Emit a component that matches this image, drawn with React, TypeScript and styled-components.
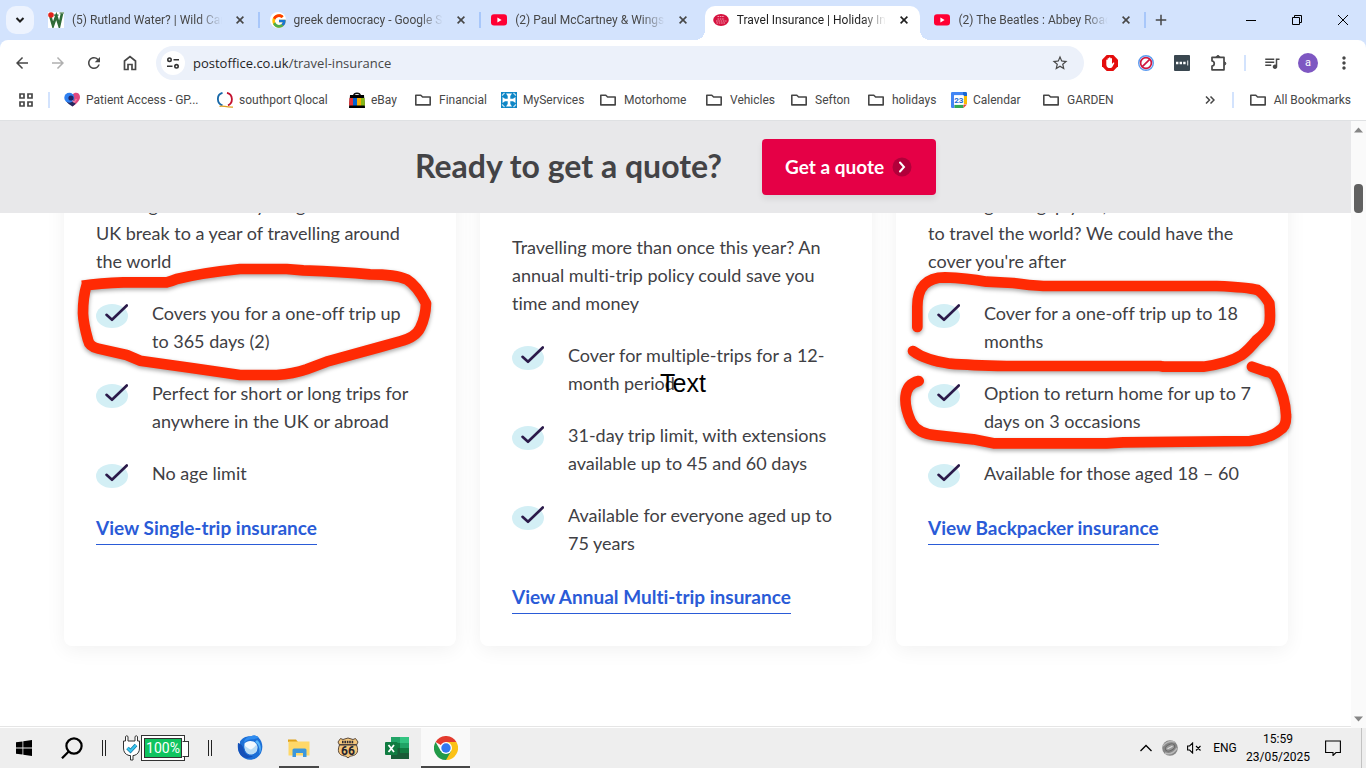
import React from "react";
import styled, { createGlobalStyle, css } from "styled-components";
import {
  MdArrowBack,
  MdArrowForward,
  MdRefresh,
  MdStarOutline,
  MdQueueMusic,
  MdMoreVert,
  MdAdd,
} from "react-icons/md";
import { FcGoogle } from "react-icons/fc";

const uiFont = `"Roboto", "Open Sans", sans-serif`;
const addressFont = `"Open Sans", "Noto Sans", sans-serif`;
const pageFont = `"Lato", "Open Sans", sans-serif`;

const GlobalStyle = createGlobalStyle`
  * { box-sizing: border-box; }
  body { margin: 0; background: #fff; font-family: ${uiFont}; }
  button { border: 0; padding: 0; background: none; color: inherit; font: inherit; cursor: pointer; }
  a { color: inherit; text-decoration: none; }
  ul, p, h2 { margin: 0; padding: 0; }
  ul { list-style: none; }
  svg { display: block; flex: none; }
`;

const Desktop = styled.div`
  position: relative;
  min-height: 100vh;
  display: flex;
  flex-direction: column;
  overflow: hidden;
`;

/* ---------- tab strip ---------- */

const TabStrip = styled.div`
  display: flex;
  height: 40px;
  background: #d3e3fd;
`;

const TabSearch = styled.button`
  display: grid;
  place-items: center;
  width: 28px;
  height: 28px;
  margin: 6px 3px 0 6px;
  border-radius: 10px;
  background: #edf3fe;
`;

const Tabs = styled.div`
  flex: 0 1 1108px;
  min-width: 0;
  display: grid;
  grid-template-columns: repeat(5, 1fr);
`;

const Tab = styled.div<{ $active?: boolean; $divided?: boolean }>`
  position: relative;
  display: flex;
  align-items: center;
  min-width: 0;
  margin: 6px 3px 0;
  padding: 0 8px 6px;
  color: ${(p) => (p.$active ? "#1f1f1f" : "#474747")};
  ${(p) =>
    p.$divided &&
    css`
      &::after {
        content: "";
        position: absolute;
        right: -4px;
        top: 6px;
        width: 2px;
        height: 16px;
        background: #a8c7fa;
      }
    `}
  ${(p) =>
    p.$active &&
    css`
      background: #fff;
      border-radius: 10px 10px 0 0;
      &::before,
      &::after {
        content: "";
        position: absolute;
        bottom: 0;
        width: 10px;
        height: 10px;
      }
      &::before {
        left: -10px;
        background: radial-gradient(circle at 0 0, transparent 10px, #fff 10px);
      }
      &::after {
        right: -10px;
        background: radial-gradient(circle at 100% 0, transparent 10px, #fff 10px);
      }
    `}
`;

const TabTitle = styled.span`
  flex: 1;
  min-width: 0;
  margin: 0 10px 0 8px;
  overflow: hidden;
  white-space: nowrap;
  font-size: 12px;
  line-height: 16px;
  mask-image: linear-gradient(to right, #000 calc(100% - 24px), transparent);
`;

const TabClose = styled.button`
  display: grid;
  place-items: center;
  width: 16px;
  height: 16px;
`;

const NewTab = styled.button`
  display: grid;
  place-items: center;
  width: 28px;
  height: 40px;
  margin-left: 2px;
`;

const WindowControls = styled.div`
  display: flex;
  margin-left: auto;
`;

const WindowButton = styled.button`
  display: grid;
  place-items: center;
  width: 46px;
  height: 40px;
`;

/* ---------- toolbar ---------- */

const ToolbarBack = styled.div`
  background: #d3e3fd;
`;

const Toolbar = styled.div`
  display: flex;
  align-items: center;
  height: 46px;
  padding: 0 4px;
  background: #fff;
  border-radius: 8px 8px 0 0;
`;

const ToolButton = styled.button<{ $faded?: boolean }>`
  display: grid;
  place-items: center;
  width: 36px;
  height: 34px;
  color: ${(p) => (p.$faded ? "#b0b0b0" : "#474747")};
`;

const Omnibox = styled.div`
  flex: 1;
  display: flex;
  align-items: center;
  height: 34px;
  margin: 0 8px;
  padding: 0 6px 0 5px;
  border-radius: 17px;
  background: #ecf1fa;
`;

const SiteInfo = styled.button`
  display: grid;
  place-items: center;
  width: 24px;
  height: 24px;
  border-radius: 12px;
  background: #fff;
`;

const Address = styled.span`
  flex: 1;
  margin-left: 8px;
  font-family: ${addressFont};
  font-size: 13px;
  line-height: 20px;
  color: #474747;
  b { font-weight: 400; color: #1f1f1f; }
`;

const Divider = styled.span`
  width: 2px;
  height: 16px;
  background: #d3e3fd;
`;

const ToolbarDivider = styled(Divider)`
  margin: 0 8px;
`;

const Avatar = styled.span`
  display: grid;
  place-items: center;
  width: 20px;
  height: 20px;
  border-radius: 10px;
  background: #7e57c2;
  color: #fff;
  font-size: 11px;
  line-height: 16px;
`;

/* ---------- bookmarks ---------- */

const BookmarkBar = styled.nav`
  display: flex;
  align-items: center;
  height: 35px;
  padding: 0 15px 7px 18px;
  border-bottom: 1px solid #dfe1e3;
  background: #fff;
`;

const AppsButton = styled.button`
  width: 16px;
  height: 16px;
  margin-right: 14px;
`;

const Bookmarks = styled.div`
  flex: 1;
  min-width: 0;
  margin-left: 14px;
  display: grid;
  grid-template-columns: 153px 132px 66px 86px 99px 106px 85px 77px 83px 92px auto;
  justify-content: start;
`;

const Bookmark = styled.a`
  display: flex;
  align-items: center;
  gap: 8px;
  height: 28px;
  white-space: nowrap;
  font-size: 12px;
  line-height: 16px;
  color: #474747;
`;

const SiteBookmark = styled(Bookmark)`
  gap: 6px;
`;

const Overflow = styled.button`
  display: grid;
  place-items: center;
  width: 16px;
  height: 16px;
  margin-right: 14px;
`;

const AllBookmarks = styled(Bookmark)`
  margin-left: 16px;
`;

/* ---------- page ---------- */

const Viewport = styled.div`
  flex: 1;
  display: flex;
`;

const Main = styled.main`
  flex: 1;
  min-width: 0;
  margin-bottom: 1px;
  border-bottom: 1px solid #e5e5e5;
  background: #fff;
  font-family: ${pageFont};
  font-variant-ligatures: none;
  color: #404044;
`;

const QuoteBar = styled.section`
  display: flex;
  align-items: center;
  justify-content: center;
  gap: 40px;
  height: 92px;
  background: #e8e8ea;
`;

const QuoteTitle = styled.h2`
  padding-bottom: 2px;
  font-size: 32px;
  line-height: 40px;
  font-weight: 700;
  color: #434346;
`;

const QuoteButton = styled.button`
  display: flex;
  align-items: center;
  gap: 8px;
  height: 56px;
  padding: 0 24px 0 23px;
  border-radius: 4px;
  background: #e50046;
  box-shadow: 0 4px 6px rgba(0, 0, 0, 0.08);
  color: #fff;
  font-size: 19px;
  line-height: 24px;
  font-weight: 700;
`;

const CardArea = styled.section`
  overflow: hidden;
  padding: 0 63px 64px 64px;
`;

const CardGrid = styled.div`
  display: grid;
  grid-template-columns: repeat(3, 1fr);
  gap: 24px;
  margin-top: -54px;
`;

const Card = styled.article<{ $lowered?: boolean }>`
  padding: ${(p) => (p.$lowered ? 74 : 32)}px 32px 32px;
  border-radius: 8px;
  background: #fff;
  box-shadow: 0 4px 20px rgba(0, 0, 0, 0.06);
  font-size: 18px;
  line-height: 28px;
  white-space: nowrap;
`;

const Benefits = styled.ul`
  display: grid;
  gap: 24px;
  margin: 24px 0 26px;
`;

const Benefit = styled.li`
  display: flex;
  align-items: flex-start;
  gap: 24px;
  svg { margin-top: 5px; }
`;

const CardLink = styled.a`
  display: inline-block;
  padding-bottom: 2px;
  border-bottom: 1px solid #2a5bd7;
  color: #2a5bd7;
  font-size: 19px;
  font-weight: 700;
`;

const ScrollBar = styled.div`
  display: flex;
  flex-direction: column;
  align-items: center;
  width: 15px;
  padding: 6px 0;
  background: #fafafa;
`;

const Thumb = styled.div`
  width: 9px;
  height: 29px;
  margin: 51px 0 auto;
  border-radius: 4px;
  background: #616161;
`;

/* ---------- taskbar ---------- */

const Taskbar = styled.footer`
  display: flex;
  align-items: center;
  height: 40px;
  background: #eee;
  color: #000;
`;

const TaskButton = styled.button<{ $open?: boolean; $active?: boolean }>`
  display: grid;
  place-items: center;
  width: 49px;
  height: 40px;
  border-top: 2px solid transparent;
  border-bottom: 2px solid ${(p) => (p.$open ? "#484848" : "transparent")};
  ${(p) => p.$active && css`background: #f9f9f9; border-top-color: #f9f9f9;`}
`;

const StartButton = styled(TaskButton)`
  width: 48px;
`;

const MailButton = styled(TaskButton)`
  margin-left: 13px;
`;

const FilesButton = styled(TaskButton)`
  width: 40px;
  margin: 0 4px 0 5px;
`;

const Grip = styled.span`
  width: 4px;
  height: 16px;
  border: solid #222;
  border-width: 0 1px;
`;

const PowerMeter = styled.div`
  display: flex;
  align-items: center;
  margin: 0 18px 0 16px;
`;

const Battery = styled.div`
  position: relative;
  display: flex;
  width: 44px;
  height: 26px;
  margin-right: 5px;
  padding: 2px;
  border: 1px solid #333;
  background: #fff;
  &::after {
    content: "";
    position: absolute;
    right: -5px;
    top: 5px;
    width: 5px;
    height: 14px;
    border: 1px solid #333;
    border-left-color: #fff;
    background: #fff;
  }
`;

const Charge = styled.span`
  flex: 1;
  border: 1px solid #333;
  background: #0fc45f;
  color: #fff;
  font-size: 14px;
  line-height: 18px;
  text-align: center;
`;

const Tray = styled.div`
  display: flex;
  align-items: center;
  margin-left: auto;
  font-size: 12px;
  line-height: 18px;
`;

const TrayButton = styled.button`
  display: grid;
  place-items: center;
  width: 24px;
  height: 40px;
`;

const Language = styled.button`
  width: 38px;
`;

const Clock = styled.time`
  width: 68px;
  text-align: center;
`;

const NoticeButton = styled(TrayButton)`
  width: 42px;
  margin-right: 7px;
`;

const PeekEdge = styled.span`
  width: 5px;
  height: 40px;
  border-left: 1px solid #c2c2c2;
`;

/* ---------- annotations ---------- */

const Markup = styled.svg`
  position: absolute;
  left: 0;
  top: 0;
  pointer-events: none;
  filter: drop-shadow(0 2px 2px rgba(0, 0, 0, 0.35));
`;

const TextNote = styled.span`
  position: absolute;
  left: 660px;
  top: 369px;
  font: 25px/28px "Liberation Sans", Arial, sans-serif;
  color: #000;
`;

/* ---------- drawings ---------- */

const Folder = () => (
  <svg width="16" height="16" viewBox="0 0 16 16" fill="none" stroke="#474747" strokeWidth="1.6" strokeLinejoin="round">
    <path d="M.8 12.9V3.2h5l1.800 1.800h7.600v7.900H.8z" />
  </svg>
);

const YouTube = () => (
  <svg width="16" height="16" viewBox="0 0 16 16">
    <rect y="2.200" width="16" height="11.400" rx="3" fill="#ff0033" />
    <path d="M6.400 5.400v5l4.200-2.500z" fill="#fff" />
  </svg>
);

const WildCamping = () => (
  <svg width="16" height="16" viewBox="0 0 16 16">
    <rect width="16" height="16" fill="#fff" />
    <path d="M2.500 5 5 13.500 8.300 4l3 9.500L14 1.500" fill="none" stroke="#2f6b38" strokeWidth="2.600" />
    <path d="M6 3.200h4.500M11.500 1h4.500" stroke="#2f6b38" strokeWidth="1.200" />
    <circle cx="3" cy="3" r="2.800" fill="#e2231a" />
  </svg>
);

const PostOffice = () => (
  <svg width="16" height="16" viewBox="0 0 16 16">
    <ellipse cx="8" cy="8" rx="7.800" ry="6" fill="#d6123f" />
    <path d="M4.500 4.500h7M4.500 7h7M3 9h10.500M3.500 11h9" stroke="#f3a9ba" strokeWidth=".9" strokeDasharray="1.600 .7" />
  </svg>
);

const GoogleTile = () => (
  <svg width="16" height="16" viewBox="0 0 16 16">
    <circle cx="8" cy="8" r="8" fill="#fff" />
    <FcGoogle x="1" y="1" width="14" height="14" />
  </svg>
);

const Heart = () => (
  <svg width="16" height="16" viewBox="0 0 16 16">
    <path d="M8.500 14.500C12 12 16 9 16 5c0-4.500-5-5.500-7.500-2.500L7 8z" fill="#e0487f" />
    <path d="M2 8.500C3 11.500 6 13 8.500 14.500L11.500 12 9 5z" fill="#23285e" />
    <circle cx="5.300" cy="5.800" r="5" fill="#2f80f0" />
    <circle cx="7" cy="6" r="2.600" fill="#1d2566" />
    <path d="m8.500 8.500 1.700 1.700L12.500 7" stroke="#f07fa8" strokeWidth="1.300" fill="none" />
  </svg>
);

const Qlocal = () => (
  <svg width="16" height="16" viewBox="0 0 16 16" fill="none">
    <path d="M5.500.8C-.8 2.500-.5 11.500 5.500 13.300" stroke="#1768a8" strokeWidth="1.800" />
    <path d="M10 .8c6.500 1.700 6.200 10.500 1 12.500" stroke="#c4122f" strokeWidth="1.800" />
    <path d="M2.500 14.300c4-1 6 1.200 13.500.8" stroke="#e0a020" strokeWidth="1.200" />
  </svg>
);

const EbayBag = () => (
  <svg width="16" height="16" viewBox="0 0 16 16">
    <path d="M4.500 4C5 .3 11 .3 11.500 4" fill="none" stroke="#111" strokeWidth="1.400" />
    <path d="M1 3h14l1 13H0z" fill="#000" />
    <path d="M.5 6H4v7.500H0z" fill="#e53238" />
    <path d="M4 6h4v7.500H4z" fill="#0064d2" />
    <path d="M8 6h4v7.500H8z" fill="#f5af02" />
    <path d="M12 6h3.500l.5 7.500h-4z" fill="#86b817" />
  </svg>
);

const MyServices = () => (
  <svg width="16" height="16" viewBox="0 0 16 16">
    <rect width="16" height="16" fill="#0e86c6" />
    <path d="M5 1.500h6L9.300 4v2.700H12L14.500 5v6L12 9.300H9.300V12l1.700 2.500H5L6.700 12V9.300H4L1.500 11V5L4 6.700h2.700V4z" fill="#fff" />
    <path d="M1 3.500 3.500 1M12.500 1 15 3.500M1 12.500 3.500 15M15 12.500 12.500 15" stroke="#bfe2f4" strokeWidth="1.200" />
  </svg>
);

const CalendarIcon = () => (
  <svg width="16" height="16" viewBox="0 0 16 16">
    <path d="M0 1.200A1.200 1.200 0 0 1 1.200 0H12v3.500H3.500V16H1.200A1.200 1.200 0 0 1 0 14.800z" fill="#4285f4" />
    <path d="M12 0h2.800A1.200 1.200 0 0 1 16 1.200V4h-4z" fill="#1967d2" />
    <path d="M12.500 4H16v8h-3.500z" fill="#fbbc04" />
    <path d="M3.500 12.500h9V16h-9z" fill="#34a853" />
    <path d="M12.500 12.500H16L12.500 16z" fill="#ea4335" />
    <path d="M3 3.200h9.800v9.600H3z" fill="#fff" />
    <text x="7.800" y="11" fontSize="8" fontWeight="700" textAnchor="middle" fill="#1967d2">23</text>
  </svg>
);

const Tick = () => (
  <svg width="32" height="24" viewBox="0 0 32 24">
    <ellipse cx="16" cy="12" rx="16" ry="12" fill="#d3eff5" />
    <path d="M10.500 10.800l5.500 5L30.800 1.500" fill="none" stroke="#2b1a4a" strokeWidth="2.600" strokeLinecap="round" strokeLinejoin="round" />
  </svg>
);

const Arrow = ({ down }: { down?: boolean }) => (
  <svg width="9" height="6" viewBox="0 0 9 6">
    <path d={down ? "M0 .5h9L4.500 5.500z" : "M0 5.500h9L4.500.5z"} fill="#868686" />
  </svg>
);

type TabItem = { title: string; icon: React.ReactNode; active?: boolean; divided?: boolean };

const tabs: TabItem[] = [
  { title: "(5) Rutland Water? | Wild Cam", icon: <WildCamping />, divided: true },
  { title: "greek democracy - Google S", icon: <GoogleTile />, divided: true },
  { title: "(2) Paul McCartney & Wings", icon: <YouTube /> },
  { title: "Travel Insurance | Holiday Ins", icon: <PostOffice />, active: true },
  { title: "(2) The Beatles : Abbey Road", icon: <YouTube />, divided: true },
];

const bookmarks: { label: string; icon?: React.ReactNode }[] = [
  { label: "Patient Access - GP...", icon: <Heart /> },
  { label: "southport Qlocal", icon: <Qlocal /> },
  { label: "eBay", icon: <EbayBag /> },
  { label: "Financial" },
  { label: "MyServices", icon: <MyServices /> },
  { label: "Motorhome" },
  { label: "Vehicles" },
  { label: "Sefton" },
  { label: "holidays" },
  { label: "Calendar", icon: <CalendarIcon /> },
  { label: "GARDEN" },
];

const cards = [
  {
    intro: ["Looking for cover anything from a", "UK break to a year of travelling around", "the world"],
    benefits: [
      ["Covers you for a one-off trip up", "to 365 days (2)"],
      ["Perfect for short or long trips for", "anywhere in the UK or abroad"],
      ["No age limit"],
    ],
    link: "View Single-trip insurance",
  },
  {
    lowered: true,
    intro: ["Travelling more than once this year? An", "annual multi-trip policy could save you", "time and money"],
    benefits: [
      ["Cover for multiple-trips for a 12-", "month period"],
      ["31-day trip limit, with extensions", "available up to 45 and 60 days"],
      ["Available for everyone aged up to", "75 years"],
    ],
    link: "View Annual Multi-trip insurance",
  },
  {
    intro: ["Heading on a gap year, or want", "to travel the world? We could have the", "cover you're after"],
    benefits: [
      ["Cover for a one-off trip up to 18", "months"],
      ["Option to return home for up to 7", "days on 3 occasions"],
      ["Available for those aged 18 – 60"],
    ],
    link: "View Backpacker insurance",
  },
];

const Lines = ({ of }: { of: string[] }) => (
  <>
    {of.map((line, i) => (
      <React.Fragment key={line}>
        {i > 0 && <br />}
        {line}
      </React.Fragment>
    ))}
  </>
);

export default function App() {
  return (
    <Desktop>
      <GlobalStyle />
      <TabStrip>
        <TabSearch aria-label="Search tabs">
          <svg width="10" height="8" viewBox="0 0 10 8" fill="none" stroke="#1f1f1f" strokeWidth="2">
            <path d="M1.500 2 5 5.500 8.500 2" />
          </svg>
        </TabSearch>
        <Tabs>
          {tabs.map((t) => (
            <Tab key={t.title} $active={t.active} $divided={t.divided}>
              {t.icon}
              <TabTitle>{t.title}</TabTitle>
              <TabClose aria-label="Close tab">
                <svg width="8" height="8" viewBox="0 0 8 8" stroke="currentColor" strokeWidth="1.600">
                  <path d="m.6.6 6.800 6.800M7.400.6.6 7.400" />
                </svg>
              </TabClose>
            </Tab>
          ))}
        </Tabs>
        <NewTab aria-label="New tab">
          <MdAdd size={18} color="#474747" />
        </NewTab>
        <WindowControls>
          <WindowButton aria-label="Minimise">
            <svg width="10" height="10" viewBox="0 0 10 10"><path d="M0 5h10v1H0z" /></svg>
          </WindowButton>
          <WindowButton aria-label="Restore">
            <svg width="10" height="10" viewBox="0 0 10 10" fill="none" stroke="#000">
              <path d="M.5 2.500h7v7h-7zM2.500 2.500v-2h7v7h-2" />
            </svg>
          </WindowButton>
          <WindowButton aria-label="Close">
            <svg width="10" height="10" viewBox="0 0 10 10" stroke="#000"><path d="m0 0 10 10M10 0 0 10" /></svg>
          </WindowButton>
        </WindowControls>
      </TabStrip>

      <ToolbarBack>
        <Toolbar>
          <ToolButton aria-label="Back"><MdArrowBack size={18} /></ToolButton>
          <ToolButton aria-label="Forward" $faded><MdArrowForward size={18} /></ToolButton>
          <ToolButton aria-label="Reload"><MdRefresh size={18} /></ToolButton>
          <ToolButton aria-label="Home">
            <svg width="14" height="16" viewBox="0 0 14 16" fill="none" stroke="#474747" strokeWidth="1.700">
              <path d="M1.500 14.500V6L7 1.500 12.500 6v8.500H9v-5H5v5z" />
            </svg>
          </ToolButton>
          <Omnibox>
            <SiteInfo aria-label="Site information">
              <svg width="14" height="14" viewBox="0 0 14 14" fill="none" stroke="#333" strokeWidth="1.600">
                <circle cx="3.500" cy="3.700" r="1.700" />
                <circle cx="10.500" cy="10.300" r="1.700" />
                <path d="M7.500 3.700H13M1 10.300h5.500" />
              </svg>
            </SiteInfo>
            <Address><b>postoffice.co.uk</b>/travel-insurance</Address>
            <ToolButton aria-label="Bookmark this page"><MdStarOutline size={18} /></ToolButton>
          </Omnibox>
          <ToolButton aria-label="Ad blocker">
            <svg width="16" height="16" viewBox="0 0 16 16">
              <path d="M4.700 0h6.600L16 4.700v6.600L11.300 16H4.700L0 11.300V4.700z" fill="#e40d0d" />
              <path d="M4.300 8V5.300c0-1 1.300-1 1.300 0V3.700c0-1 1.400-1 1.400 0V3c0-1 1.500-1 1.500 0v.8c0-1 1.500-1 1.500.2v5l1-1.200c.8-.8 1.600-.2 1.200.6l-1.900 3.600C9.500 13.600 4.300 14 4.300 9.500z" fill="#fff" />
            </svg>
          </ToolButton>
          <ToolButton aria-label="Popup blocker">
            <svg width="16" height="16" viewBox="0 0 16 16" fill="none">
              <circle cx="8" cy="8" r="7.300" stroke="#5b9bf0" strokeWidth="1.400" fill="#fff" />
              <circle cx="8" cy="8" r="5.400" stroke="#cf1740" strokeWidth="1.700" />
              <path d="m4.300 11.700 7.400-7.400" stroke="#cf1740" strokeWidth="1.700" />
            </svg>
          </ToolButton>
          <ToolButton aria-label="Password manager">
            <svg width="16" height="16" viewBox="0 0 16 16">
              <rect width="16" height="16" rx="1" fill="#3a4750" />
              <path d="M2 6.800h2.400v2.400H2zm3.600 0H8v2.400H5.600zm3.600 0h2.400v2.400H9.200zM13.300 5.500h.9v5h-.9z" fill="#fff" />
            </svg>
          </ToolButton>
          <ToolButton aria-label="Extensions">
            <svg width="17" height="16" viewBox="0 0 17 16" fill="none" stroke="#474747" strokeWidth="1.700" strokeLinejoin="round">
              <path d="M2 2.300h12v12.500H2v-3.700c3-.3 3-4.800 0-5.100z" />
              <path d="M6.300 2C6.300 0 9.700 0 9.700 2M14.300 6.800c2 0 2 3.400 0 3.400" fill="#474747" strokeWidth="1" />
            </svg>
          </ToolButton>
          <ToolbarDivider />
          <ToolButton aria-label="Media controls"><MdQueueMusic size={18} /></ToolButton>
          <ToolButton aria-label="Profile"><Avatar>a</Avatar></ToolButton>
          <ToolButton aria-label="Menu"><MdMoreVert size={20} /></ToolButton>
        </Toolbar>
      </ToolbarBack>

      <BookmarkBar>
        <AppsButton aria-label="Apps">
          <svg width="16" height="16" viewBox="0 0 16 16" fill="none" stroke="#474747" strokeWidth="1.700">
            <path d="M2 2h4v4H2zM10 2h4v4h-4zM2 10h4v4H2zM10 10h4v4h-4z" />
          </svg>
        </AppsButton>
        <Divider />
        <Bookmarks>
          {bookmarks.map((b) =>
            b.icon ? (
              <SiteBookmark href="#" key={b.label}>{b.icon}{b.label}</SiteBookmark>
            ) : (
              <Bookmark href="#" key={b.label}><Folder />{b.label}</Bookmark>
            ),
          )}
        </Bookmarks>
        <Overflow aria-label="More bookmarks">
          <svg width="10" height="8" viewBox="0 0 10 8" fill="none" stroke="#474747" strokeWidth="1.500">
            <path d="m1 .5 3.500 3.500L1 7.500M5.500.5 9 4 5.500 7.500" />
          </svg>
        </Overflow>
        <Divider />
        <AllBookmarks href="#"><Folder />All Bookmarks</AllBookmarks>
      </BookmarkBar>

      <Viewport>
        <Main>
          <QuoteBar>
            <QuoteTitle>Ready to get a quote?</QuoteTitle>
            <QuoteButton>
              Get a quote
              <svg width="20" height="20" viewBox="0 0 20 20">
                <circle cx="10" cy="10" r="9.500" fill="#b1003a" />
                <path d="m8 5.500 4 4.500-4 4.500" fill="none" stroke="#fff" strokeWidth="2" strokeLinecap="round" />
              </svg>
            </QuoteButton>
          </QuoteBar>
          <CardArea>
            <CardGrid>
              {cards.map((c) => (
                <Card key={c.link} $lowered={c.lowered}>
                  <p><Lines of={c.intro} /></p>
                  <Benefits>
                    {c.benefits.map((b) => (
                      <Benefit key={b[0]}>
                        <Tick />
                        <span><Lines of={b} /></span>
                      </Benefit>
                    ))}
                  </Benefits>
                  <CardLink href="#">{c.link}</CardLink>
                </Card>
              ))}
            </CardGrid>
          </CardArea>
        </Main>
        <ScrollBar>
          <Arrow />
          <Thumb />
          <Arrow down />
        </ScrollBar>
      </Viewport>

      <Taskbar>
        <StartButton aria-label="Start">
          <svg width="16" height="16" viewBox="0 0 16 16">
            <path d="M0 2.300 6.500 1.400v6.200H0zM7.300 1.300 16 0v7.600H7.300zM0 8.400h6.500v6.200L0 13.700zM7.300 8.400H16V16l-8.700-1.300z" />
          </svg>
        </StartButton>
        <StartButton aria-label="Search">
          <svg width="22" height="22" viewBox="0 0 22 22" fill="none" stroke="#000" strokeWidth="2.200">
            <circle cx="13" cy="9" r="7.600" />
            <path d="M7.700 14.500 1 21.300" />
          </svg>
        </StartButton>
        <Grip style={{ marginLeft: 6 }} />
        <PowerMeter>
          <svg width="19" height="26" viewBox="0 0 19 26" fill="#fff" stroke="#333">
            <path d="M3.500 6V1.500q1.300-1.500 2.500 0V6h7V1.500q1.300-1.500 2.500 0V6h2v7q0 6-5.500 7.500H11V25H8.500v-4.500H7Q1.500 19 1.500 13V6z" />
            <path d="m5.500 13 3 3 5.500-6" fill="none" stroke="#187aa8" strokeWidth="3.600" />
            <path d="m5.500 13 3 3 5.500-6" fill="none" stroke="#39c6ee" strokeWidth="2" />
          </svg>
          <Battery><Charge>100%</Charge></Battery>
        </PowerMeter>
        <Grip />
        <MailButton aria-label="Thunderbird">
          <svg width="26" height="26" viewBox="0 0 26 26">
            <path d="M3 6.500C5 3 9 .8 14 1.200c3-1.500 7 0 7.500 1.300 4 4 5 10 2.500 15.500C20 26 9 27 3.500 20 .5 16 .5 11 1 8l2 2z" fill="#1c6fd6" />
            <path d="M14 1.200c3-1.500 7 0 7.500 1.300C20 4 17 4 13 4.500 10 5 8 6.500 7 8c0-4 3-6 7-6.800z" fill="#2f8cf0" />
            <path d="M20 5c4 3 5 9 2.500 14 .5-5-.5-10-4.500-12z" fill="#58b7fa" />
            <path d="M1 8c3 .5 5 3 6 7 1 4 4 6 9 6C9 26 1 21 1 12z" fill="#1450b8" />
            <path d="M7.500 8.500C10 5.500 16 5 19 8.500c3 4 1 9-3 10.500-5 1.500-9-2-8.500-10.500z" fill="#f2f9fe" />
            <path d="M7.500 10.500q5 4 6.500 4t5.500-5c2 5-1 9-4 9.700-5 1-8-2.700-8-8.700z" fill="#b8dcf5" />
          </svg>
        </MailButton>
        <FilesButton aria-label="File Explorer" $open>
          <svg width="22" height="20" viewBox="0 0 22 20">
            <path d="M0 1.500h8l2 2.500H0z" fill="#e0a21b" />
            <path d="M.5 3.500h21v14H.5z" fill="#ffd868" />
            <path d="M4.500 19v-7q0-1.500 1.500-1.500h11q1.500 0 1.500 1.500v7H15v-4H8v4z" fill="#3c97dc" />
          </svg>
        </FilesButton>
        <TaskButton aria-label="Route 66">
          <svg width="22" height="22" viewBox="0 0 22 22">
            <path d="M3.500 1.500 6 2.500l5-1.500 5 1.500 2.500-1L21 5l-1.500 3c2.500 6 .5 9.500-3 10.500-2.500.5-4 .8-5.500 2.500-1.500-1.700-3-2-5.500-2.500C2 17.500 0 14 2.500 8L1 5z" fill="#f4c67b" stroke="#5b4a3c" />
            <path d="M2.500 7.800h17" stroke="#2e2a33" strokeWidth="1.300" />
            <path d="M5 5h12" stroke="#2e2a33" strokeWidth="2.600" strokeDasharray="1.600 .8" />
            <text x="11" y="17.500" fontSize="12" fontWeight="700" textAnchor="middle" fill="#25222e">66</text>
          </svg>
        </TaskButton>
        <TaskButton aria-label="Excel">
          <svg width="24" height="22" viewBox="0 0 24 22">
            <path d="M6 0h9v7H6z" fill="#21a366" />
            <path d="M15 0h9v6h-9z" fill="#33c481" />
            <path d="M6 6h9v5H6z" fill="#107c41" />
            <path d="M15 6h9v5h-9z" fill="#21a366" />
            <path d="M6 11h9v11H6z" fill="#185c37" />
            <path d="M15 11h9v5h-9z" fill="#107c41" />
            <path d="M14 16h10v6H14z" fill="#185c37" />
            <rect y="5" width="12.500" height="13" rx="1" fill="#107c41" />
            <path d="m3.500 8 5.500 7M9 8l-5.500 7" stroke="#fff" strokeWidth="1.800" />
          </svg>
        </TaskButton>
        <TaskButton aria-label="Chrome" $open $active>
          <svg width="24" height="24" viewBox="0 0 24 24">
            <path d="M12 12 1.600 6a12 12 0 0 1 20.800 0z" fill="#e33b2e" />
            <path d="M12 12V6h10.400A12 12 0 0 1 12 24z" fill="#fbc116" />
            <path d="M1.600 6 6.800 15 12 12l5.200 3L12 24A12 12 0 0 1 1.600 6z" fill="#229a48" />
            <circle cx="12" cy="12" r="6" fill="#fff" />
            <circle cx="12" cy="12" r="4.700" fill="#3178f0" />
          </svg>
        </TaskButton>
        <Tray>
          <TrayButton aria-label="Show hidden icons">
            <svg width="12" height="8" viewBox="0 0 12 8" fill="none" stroke="#000" strokeWidth="1.300"><path d="m.5 7 5.500-5.500L11.500 7" /></svg>
          </TrayButton>
          <TrayButton aria-label="Network">
            <svg width="16" height="16" viewBox="0 0 16 16">
              <circle cx="8" cy="8" r="7.800" fill="#858585" />
              <path d="M1 6c4-5 8-5 12-4M3 13c5 2 9 0 12-5" stroke="#b8b8b8" strokeWidth="1.500" fill="none" />
              <ellipse cx="8" cy="7.500" rx="5" ry="3" transform="rotate(-28 8 7.500)" fill="#999" stroke="#666" />
              <path d="m5.500 8.700 5-2.500" stroke="#e0e0e0" strokeWidth="1.200" />
            </svg>
          </TrayButton>
          <TrayButton aria-label="Volume">
            <svg width="15" height="12" viewBox="0 0 15 12" fill="none" stroke="#000" strokeWidth="1.100">
              <path d="M.6 4v4h2l3 3V1l-3 3zM9 4l4.500 4.500M13.500 4 9 8.500" />
            </svg>
          </TrayButton>
          <Language>ENG</Language>
          <Clock>15:59<br />23/05/2025</Clock>
          <NoticeButton aria-label="Notifications">
            <svg width="16" height="16" viewBox="0 0 16 16" fill="none" stroke="#000" strokeWidth="1.100">
              <path d="M.6 1h14.800v11.500H11l-3 3v-3H.6z" />
            </svg>
          </NoticeButton>
          <PeekEdge />
        </Tray>
      </Taskbar>

      <TextNote>Text</TextNote>
      <Markup width="1366" height="768" viewBox="0 0 1366 768" fill="none" stroke="#ff2a04" aria-hidden="true">
        <g strokeWidth="32" strokeLinejoin="round">
          <path
            transform="translate(60 200) scale(.33333)"
            d="M66 257Q120 250 190 247H320Q335 243 350 237Q430 218 540 207H680L730 211Q850 215 930 223Q1005 223 1040 238Q1072 258 1098 310Q1097 350 1081 383Q1068 412 1020 424L960 441 800 485 740 508Q700 522 650 525H540L400 505 240 482 200 465 115 446Q88 440 84 420Q70 370 69 340Q69 290 80 255"
          />
          <g transform="translate(890 200) scale(.33333)" strokeLinecap="round">
            <path d="M82 381V320Q82 232 165 232Q230 234 290 245L370 249Q420 256 460 258H980Q1075 262 1103 270Q1120 280 1138 310Q1142 350 1138 372Q1132 395 1100 420Q1075 450 1055 465Q1015 490 940 500H820L810 498H350Q240 496 180 491Q105 480 69 453" />
            <path d="M86 543C35 555 40 615 63 665Q82 702 140 706L250 718 310 730H650L700 727 1080 723Q1140 716 1170 690Q1190 680 1188 645C1187 600 1170 560 1155 530Q1145 515 1125 514L1086 500" />
          </g>
        </g>
      </Markup>
    </Desktop>
  );
}
